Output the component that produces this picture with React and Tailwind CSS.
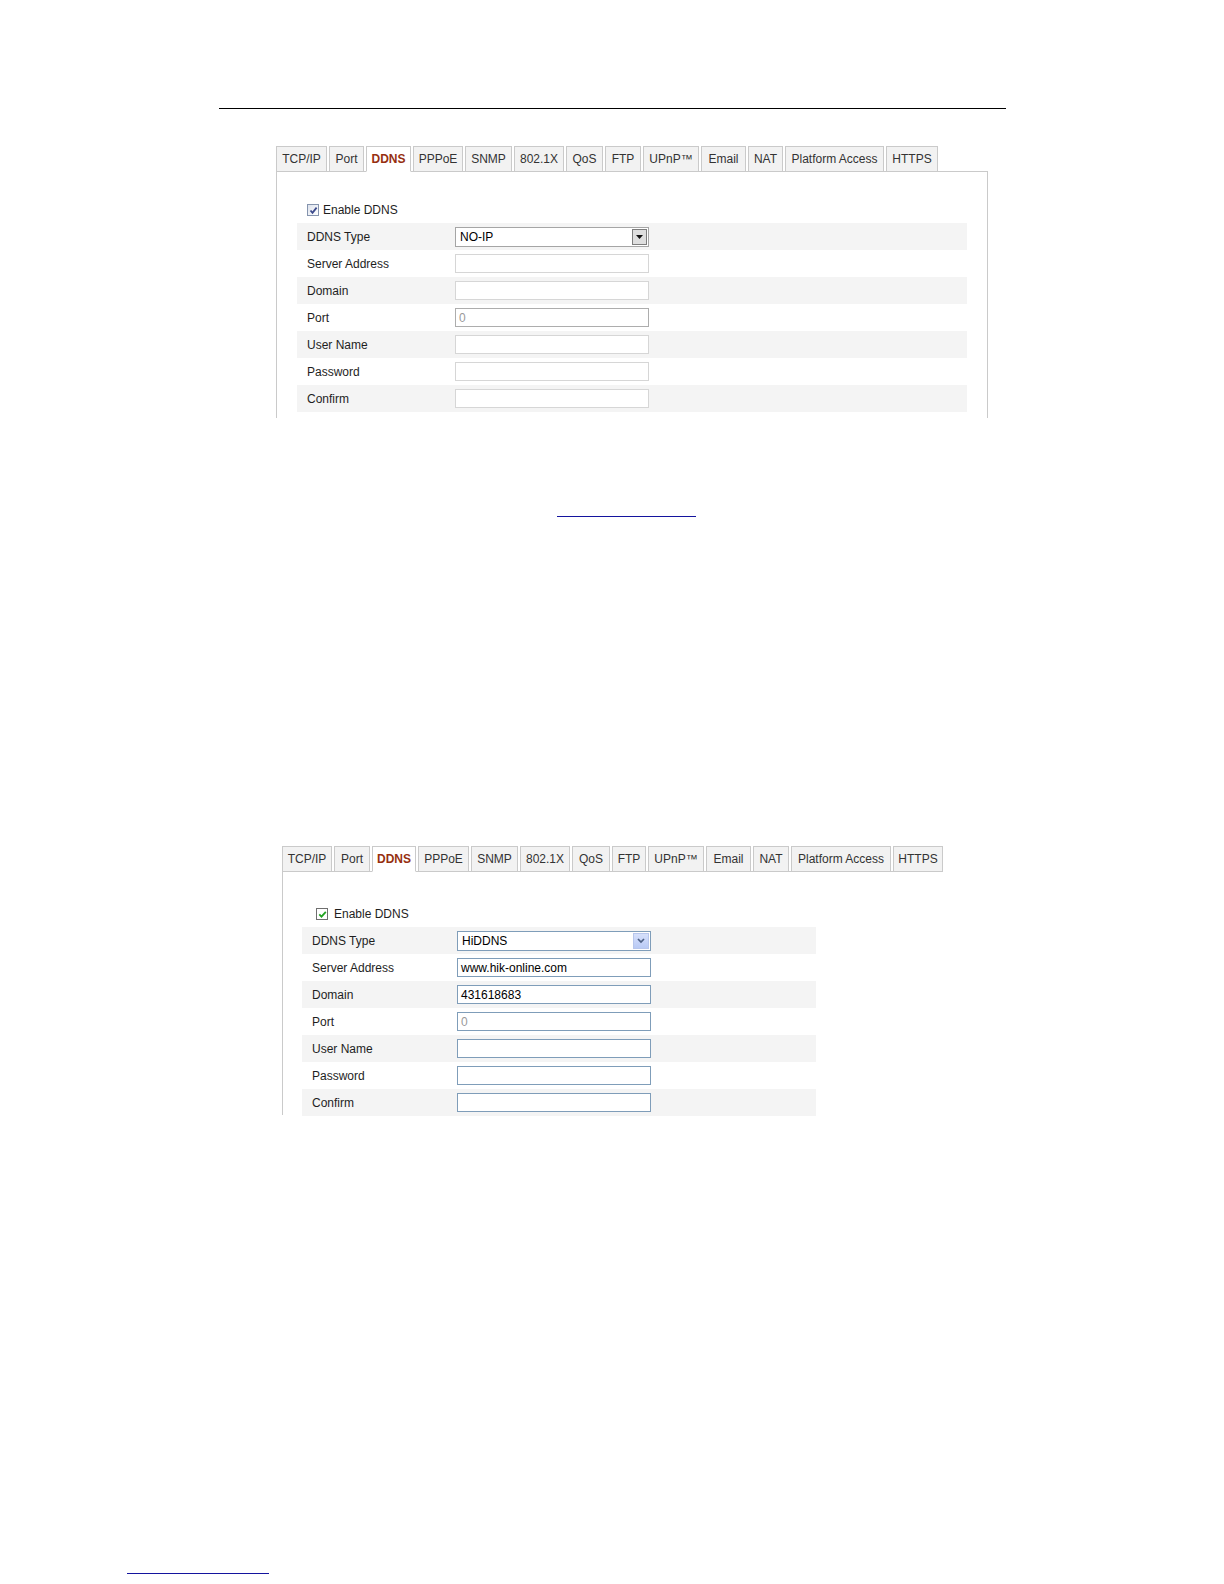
import React from 'react';

// two captures of the same DDNS settings page, pasted into a manual page

const TABS_OLD = [
  ['TCP/IP', 'w-[51px]'], ['Port', 'w-[35px]'], ['DDNS', 'w-[45px]'], ['PPPoE', 'w-[50px]'],
  ['SNMP', 'w-[47px]'], ['802.1X', 'w-[50px]'], ['QoS', 'w-[37px]'], ['FTP', 'w-[36px]'],
  ['UPnP™', 'w-[56px]'], ['Email', 'w-[45px]'], ['NAT', 'w-[35px]'], ['Platform Access', 'w-[99px]'],
  ['HTTPS', 'w-[52px]'],
];

const TABS_NEW = [
  ['TCP/IP', 'w-[50px]'], ['Port', 'w-[36px]'], ['DDNS', 'w-[44px]'], ['PPPoE', 'w-[51px]'],
  ['SNMP', 'w-[47px]'], ['802.1X', 'w-[50px]'], ['QoS', 'w-[38px]'], ['FTP', 'w-[34px]'],
  ['UPnP™', 'w-[56px]'], ['Email', 'w-[45px]'], ['NAT', 'w-[36px]'], ['Platform Access', 'w-[100px]'],
  ['HTTPS', 'w-[50px]'],
];

const Tabs = ({ tabs }) => (
  <div className="relative z-10 flex gap-[2px]">
    {tabs.map(([name, w]) => {
      const active = name === 'DDNS';
      return (
        <div
          key={name}
          className={`${w} h-[26px] flex items-center justify-center border border-[#cacaca] text-[12px] ${
            active ? 'bg-white border-b-white font-bold text-[#962f10]' : 'bg-[#f2f2f2] text-[#333]'
          }`}
        >
          {name}
        </div>
      );
    })}
  </div>
);

const CheckOld = () => (
  <div className="w-[12px] h-[12px] border border-[#8594ae] bg-gradient-to-br from-[#dde2ec] to-white flex items-center justify-center">
    <svg width="9" height="9" viewBox="0 0 9 9">
      <path d="M1.5 4.5 L3.5 6.8 L7.6 1.6" fill="none" stroke="#3c4a8c" strokeWidth="1.8" />
    </svg>
  </div>
);

const CheckNew = () => (
  <div className="w-[12px] h-[12px] border border-[#6f6f6f] bg-white flex items-center justify-center">
    <svg width="9" height="9" viewBox="0 0 9 9">
      <path d="M1.3 4.4 L3.5 6.6 L7.8 1.9" fill="none" stroke="#21a321" strokeWidth="1.8" />
    </svg>
  </div>
);

const Row = ({ label, shaded, labelW, children }) => (
  <div className={`flex items-center h-[27px] ${shaded ? 'bg-[#f4f4f4]' : ''}`}>
    <div className={`${labelW} pl-[10px] text-[12px] text-[#1e1e1e]`}>{label}</div>
    {children}
  </div>
);

const Field = ({ value, dim, tone }) => (
  <div
    className={`w-[194px] h-[19px] border flex items-center px-[3px] text-[12px] bg-white ${
      tone === 'new' ? 'border-[#7f9db9]' : dim ? 'border-[#adadad]' : 'border-[#d6d6d6]'
    } ${dim ? 'text-[#9a9a9a]' : 'text-black'}`}
  >
    {value}
  </div>
);

const SelectOld = () => (
  <div className="w-[194px] h-[20px] border border-[#a5a5a5] bg-white flex items-center justify-between pl-[4px] pr-[1px] text-[12px] text-black">
    <span>NO-IP</span>
    <div className="w-[15px] h-[16px] border border-[#7d7d7d] bg-[#dedede] flex items-center justify-center">
      <svg width="7" height="4" viewBox="0 0 7 4">
        <path d="M0 0 L7 0 L3.5 4 Z" fill="#111" />
      </svg>
    </div>
  </div>
);

const SelectNew = () => (
  <div className="w-[194px] h-[20px] border border-[#7f9db9] bg-white flex items-center justify-between pl-[4px] pr-[1px] text-[12px] text-black">
    <span>HiDDNS</span>
    <div className="w-[16px] h-[16px] border border-[#b7c6ec] bg-gradient-to-b from-[#d6e0fb] to-[#b9caf5] flex items-center justify-center">
      <svg width="8" height="6" viewBox="0 0 8 6">
        <path d="M1 1 L4 4 L7 1" fill="none" stroke="#4d6185" strokeWidth="1.7" />
      </svg>
    </div>
  </div>
);

const OldPanel = () => (
  <div className="ml-[276px]">
    <Tabs tabs={TABS_OLD} />
    <div className="-mt-px w-[712px] h-[247px] border border-b-0 border-[#cacaca] pt-[30px]">
      <div className="flex items-center gap-[4px] h-[16px] ml-[30px] text-[12px] text-[#1e1e1e]">
        <CheckOld />
        <span>Enable DDNS</span>
      </div>
      <div className="mt-[5px] ml-[20px] w-[670px]">
        <Row label="DDNS Type" shaded labelW="w-[158px]"><SelectOld /></Row>
        <Row label="Server Address" labelW="w-[158px]"><Field /></Row>
        <Row label="Domain" shaded labelW="w-[158px]"><Field /></Row>
        <Row label="Port" labelW="w-[158px]"><Field value="0" dim /></Row>
        <Row label="User Name" shaded labelW="w-[158px]"><Field /></Row>
        <Row label="Password" labelW="w-[158px]"><Field /></Row>
        <Row label="Confirm" shaded labelW="w-[158px]"><Field /></Row>
      </div>
    </div>
  </div>
);

const NewPanel = () => (
  <div className="ml-[282px]">
    <Tabs tabs={TABS_NEW} />
    <div className="-mt-px w-[661px] h-[244px] border-l border-t border-[#cacaca] pt-[34px]">
      <div className="flex items-center gap-[6px] h-[16px] ml-[33px] text-[12px] text-[#1e1e1e]">
        <CheckNew />
        <span>Enable DDNS</span>
      </div>
      <div className="mt-[5px] ml-[19px] w-[514px]">
        <Row label="DDNS Type" shaded labelW="w-[155px]"><SelectNew /></Row>
        <Row label="Server Address" labelW="w-[155px]"><Field value="www.hik-online.com" tone="new" /></Row>
        <Row label="Domain" shaded labelW="w-[155px]"><Field value="431618683" tone="new" /></Row>
        <Row label="Port" labelW="w-[155px]"><Field value="0" dim tone="new" /></Row>
        <Row label="User Name" shaded labelW="w-[155px]"><Field tone="new" /></Row>
        <Row label="Password" labelW="w-[155px]"><Field tone="new" /></Row>
        <Row label="Confirm" shaded labelW="w-[155px]"><Field tone="new" /></Row>
      </div>
    </div>
  </div>
);

export default function App() {
  return (
    <div className="w-[1224px] h-[1584px] bg-white overflow-hidden pt-[108px] font-['Liberation_Sans',Arial,sans-serif]">
      <div className="ml-[219px] w-[787px] h-px bg-black" />
      <div className="mt-[37px]">
        <OldPanel />
      </div>
      <div className="mt-[98px] ml-[557px] w-[139px] h-px bg-[#14149e]" />
      <div className="mt-[329px]">
        <NewPanel />
      </div>
      <div className="mt-[458px] ml-[127px] w-[142px] h-px bg-[#14149e]" />
    </div>
  );
}
